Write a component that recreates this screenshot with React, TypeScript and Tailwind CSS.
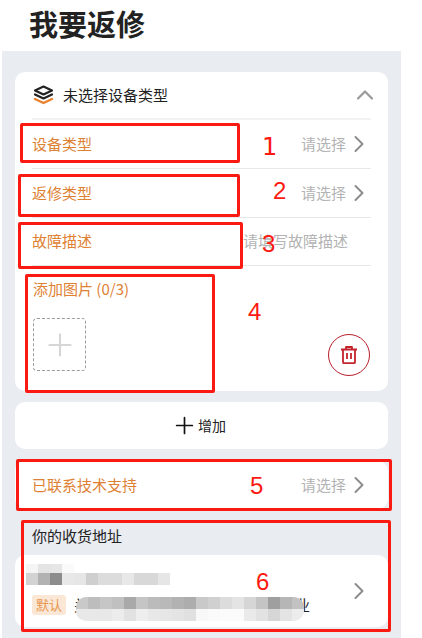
import { ChevronRight, ChevronUp, Plus } from "lucide-react";

const font = "font-['Noto_Sans_CJK_SC','Noto_Sans',sans-serif]";
const orange = "text-[15px] leading-[22px] text-[#de8134]";
const hint = "text-[15px] leading-[22px] text-[#b3b3b3]";

// mosaic over the private address, one number per 12px cell
const nameTop = [245, 228, 230, 250];
const nameBottom = [210, 178, 140, 232, 230, 207, 220, 220, 232, 216, 216, 230];
const addrTop = [201, 189, 198, 192, 169, 197, 187, 185, 178, 173, 201, 208, 220, 228, 214, 196, 159, 182, 194];
const addrBottom = [232, 232, 232, 236, 226, 238, 232, 230, 228, 224, 248, 250, 251, 251, 234, 226, 214, 228, 236];

function Cells({ values, height }: { values: number[]; height: string }) {
  return (
    <div className="flex">
      {values.map((v, i) => (
        <div key={i} className={`w-3 ${height}`} style={{ backgroundColor: `rgb(${v},${v},${v})` }} />
      ))}
    </div>
  );
}

function Arrow() {
  return <ChevronRight size={28} strokeWidth={1.7} className="-mx-[1.5px] text-[#8c8c8c]" />;
}

function Row({ label, value, last = false }: { label: string; value: string; last?: boolean }) {
  return (
    <div className={`flex items-center justify-between border-b border-[#e6e8ec] pb-[1px] ${last ? "h-[48px]" : "h-[49px]"}`}>
      <span className={orange}>{label}</span>
      {last ? (
        <span className={`${hint} pr-[23px]`}>{value}</span>
      ) : (
        <span className="flex items-center">
          <span className={hint}>{value}</span>
          <Arrow />
        </span>
      )}
    </div>
  );
}

function Mark({ box, num }: { box?: string; num?: string }) {
  if (num) return <span className={`absolute text-[24px] leading-[24px] text-[#fb1a12] ${box}`}>{num}</span>;
  return <div className={`absolute rounded-[2px] border-[3px] border-[#fb1a12] ${box}`} />;
}

export default function App() {
  return (
    <div className={`relative h-[638px] w-[422px] overflow-hidden bg-white ${font}`}>
      <h1 className="h-[51px] pl-[29px] text-[29px] font-bold leading-[46px] text-[#222]">我要返修</h1>

      <div className="ml-[2px] h-[587px] w-[399px] bg-[#e9ecf1] px-[13px] pt-[21px]">
        <div className="h-[319px] rounded-[10px] bg-white px-[17px]">
          <div className="flex h-[48px] items-center justify-between border-b-2 border-[#f1f2f4]">
            <div className="flex items-center">
              <svg width="21" height="20" viewBox="0 0 21 20" fill="none" className="mr-[9px] ml-[1px]">
                <path d="M10.5 1.5 19 5.5 10.5 9.5 2 5.5Z" stroke="#222" strokeWidth="2.2" strokeLinejoin="round" />
                <path d="M2 9.5 10.5 13.5 19 9.5" stroke="#222" strokeWidth="2.2" strokeLinecap="round" strokeLinejoin="round" />
                <path d="M2 14 10.5 18 19 14" stroke="#e8822f" strokeWidth="2.4" strokeLinecap="round" strokeLinejoin="round" />
              </svg>
              <span className="text-[15px] leading-[22px] text-[#222]">未选择设备类型</span>
            </div>
            <ChevronUp size={28} strokeWidth={1.9} className="-mr-[8px] text-[#9a9a9a]" />
          </div>

          <Row label="设备类型" value="请选择" />
          <Row label="返修类型" value="请选择" />
          <Row label="故障描述" value="请填写故障描述" last />

          <div className="flex justify-between pt-[12px]">
            <div className="pl-[1px]">
              <p className={orange}>添加图片 (0/3)</p>
              <div className="mt-[18px] flex h-[53px] w-[53px] items-center justify-center rounded-[4px] border border-dashed border-[#9c9c9c]">
                <Plus size={36} strokeWidth={1.4} className="text-[#d6d6d6]" />
              </div>
            </div>
            <div className="mt-[56px] mr-[1px] flex h-[42px] w-[42px] items-center justify-center rounded-full border border-[#b8202b]">
              <svg width="20" height="20" viewBox="0 0 20 20" fill="none" stroke="#c4242e" strokeWidth="1.8">
                <path d="M2 4.5H18M7 4.5V2H13V4.5M4 4.5V17.2C4 17.8 4.4 18.2 5 18.2H15C15.6 18.2 16 17.8 16 17.2V4.5" strokeLinejoin="round" />
                <path d="M8 8V14M12 8V14" />
              </svg>
            </div>
          </div>
        </div>

        <div className="mt-[11px] flex h-[47px] items-center justify-center rounded-[10px] bg-white pr-[6px]">
          <Plus size={27} strokeWidth={1.5} className="text-[#111]" />
          <span className="text-[14px] text-[#222]">增加</span>
        </div>

        <div className="mt-[12px] flex h-[48px] items-center justify-between rounded-[10px] bg-white pl-[17px] pr-[17px]">
          <span className={orange}>已联系技术支持</span>
          <span className="flex items-center">
            <span className={hint}>请选择</span>
            <Arrow />
          </span>
        </div>

        <p className="flex h-[46px] items-center pl-[17px] pt-[8px] text-[15px] text-[#222]">你的收货地址</p>

        <div className="flex h-[72px] items-center justify-between rounded-[10px] bg-white pr-[17px]">
          <div className="self-start pl-[11px] pt-[9px]">
            <Cells values={nameTop} height="h-[9px]" />
            <div className="overflow-hidden rounded-br-[4px]">
              <Cells values={nameBottom} height="h-3" />
            </div>
            <div className="mt-[12px] flex items-start pl-[6px]">
              <span className="-mt-[2px] rounded-[3px] bg-[#fbe7d6] px-[4px] text-[13px] leading-[20px] text-[#e8974f]">默认</span>
              <span className="-mt-[2px] ml-[8px] text-[15px] leading-[20px] text-[#222]">关</span>
              <div className="relative -ml-[13px] overflow-hidden rounded-[10px]">
                <Cells values={addrTop} height="h-3" />
                <Cells values={addrBottom} height="h-3" />
              </div>
              <span className="-ml-[9px] -mt-[2px] text-[15px] leading-[20px] text-[#222]">业</span>
            </div>
          </div>
          <Arrow />
        </div>
      </div>

      <Mark box="left-[20px] top-[123px] h-[40px] w-[220px]" />
      <Mark box="left-[18px] top-[174px] h-[43px] w-[222px]" />
      <Mark box="left-[18px] top-[222px] h-[47px] w-[225px]" />
      <Mark box="left-[25px] top-[274px] h-[119px] w-[190px]" />
      <Mark box="left-[16px] top-[459px] h-[52px] w-[376px]" />
      <Mark box="left-[21px] top-[520px] h-[112px] w-[370px]" />
      <Mark box="left-[262px] top-[135px] font-['DejaVu_Sans',sans-serif]" num="1" />
      <Mark box="left-[273px] top-[179px] font-['Liberation_Sans',sans-serif]" num="2" />
      <Mark box="left-[262px] top-[232px] font-['Liberation_Sans',sans-serif]" num="3" />
      <Mark box="left-[248px] top-[300px] font-['Liberation_Sans',sans-serif]" num="4" />
      <Mark box="left-[250px] top-[474px] font-['Liberation_Sans',sans-serif]" num="5" />
      <Mark box="left-[256px] top-[570px] font-['Liberation_Sans',sans-serif]" num="6" />
    </div>
  );
}
